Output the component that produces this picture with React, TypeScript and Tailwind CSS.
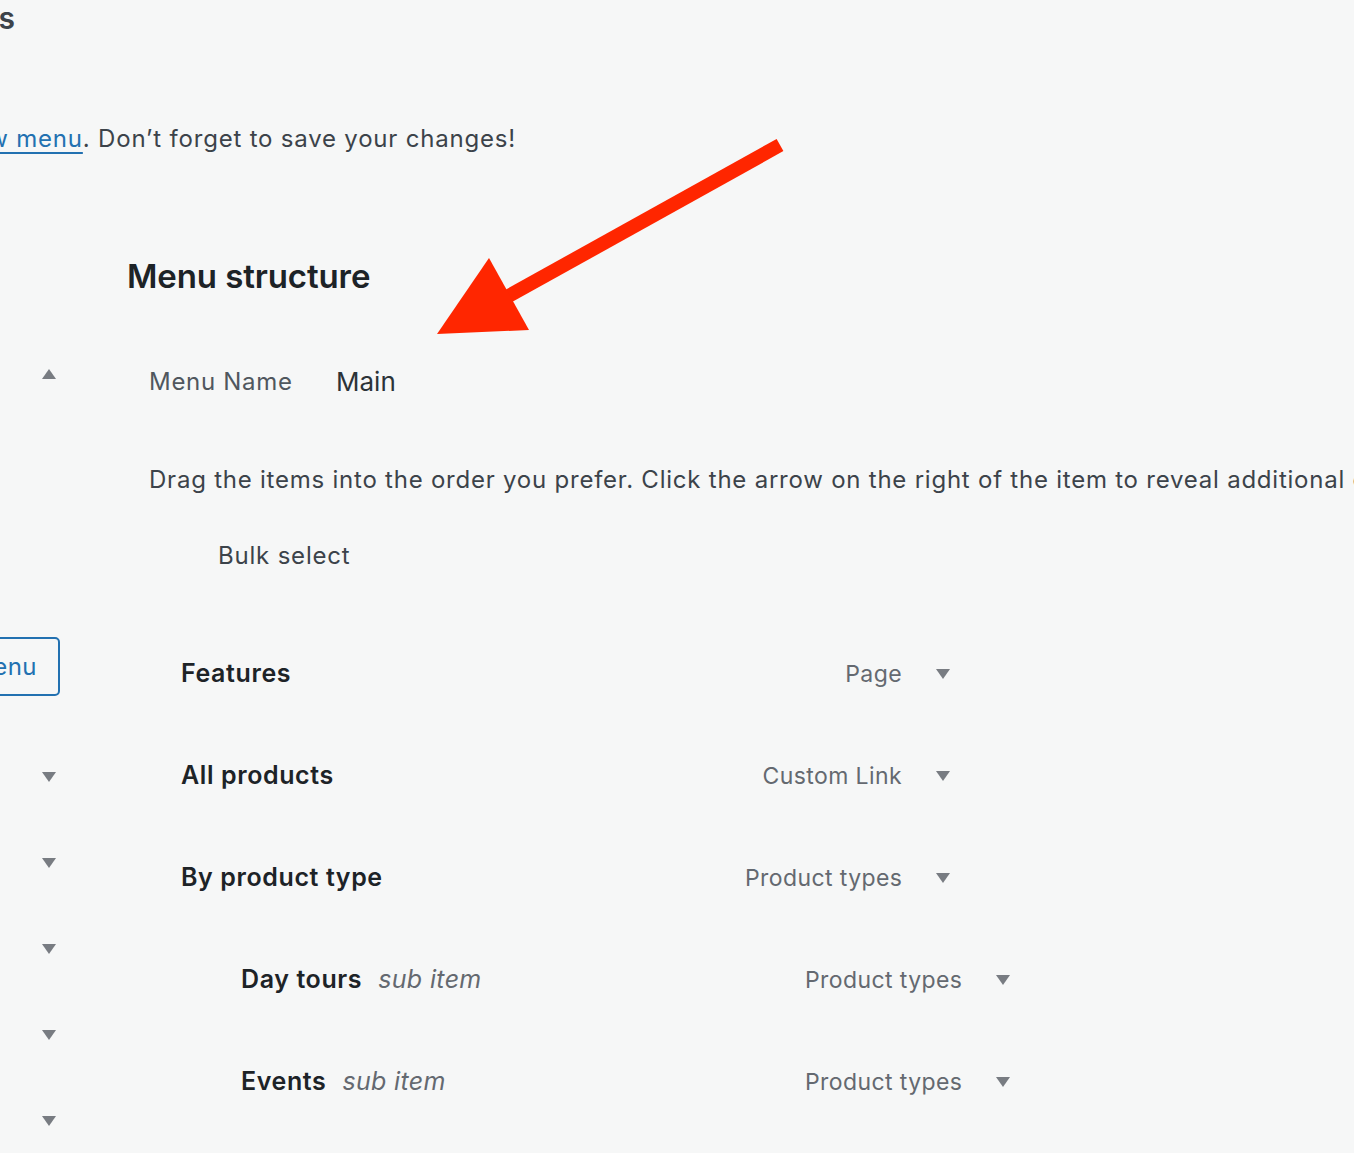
import React from "react";

type Item = { title: string; type: string; sub?: boolean };

const items: Item[] = [
  { title: "Features", type: "Page" },
  { title: "All products", type: "Custom Link" },
  { title: "By product type", type: "Product types" },
  { title: "Day tours", type: "Product types", sub: true },
  { title: "Events", type: "Product types", sub: true },
];

const Caret = ({ up = false }: { up?: boolean }) => (
  <svg width="14" height="10" viewBox="0 0 14 10" className="block shrink-0">
    <path d={up ? "M0 10 L7 0 L14 10 Z" : "M0 0 L14 0 L7 10 Z"} fill="#787c82" />
  </svg>
);

const MenuRow = ({ item }: { item: Item }) => (
  <div className={`flex items-center h-[102px] ${item.sub ? "pl-[114px]" : "pl-[54px]"}`}>
    <div className="flex items-baseline gap-[16px] w-[564px]">
      <span className="text-[25px] font-semibold text-[#1d2327] tracking-[0.6px]">{item.title}</span>
      {item.sub && <span className="text-[25px] italic text-[#646970] tracking-[0.35px]">sub item</span>}
    </div>
    <span className="w-[157px] text-right text-[23px] text-[#646970] tracking-[0.4px]">{item.type}</span>
    <span className="ml-[34px]">
      <Caret />
    </span>
  </div>
);

export default function App() {
  return (
    <div
      className="relative w-[1354px] h-[1153px] overflow-hidden bg-[#f6f7f7] text-[#3c434a]"
      style={{ fontFamily: "Inter, 'Noto Sans', sans-serif" }}
    >
      {/* page title, clipped at the left edge */}
      <div className="flex justify-end w-[15px] h-[36px]">
        <h1 className="whitespace-nowrap text-[30px] leading-[36px] font-semibold text-[#3c434a]">Menus</h1>
      </div>

      <div className="flex justify-end w-[516px] mt-[86px] h-[34px]">
        <p className="whitespace-nowrap text-[24px] leading-[34px] tracking-[0.8px]">
          Edit your menu below, or{" "}
          <a className="text-[#2271b1] underline underline-offset-[5px] decoration-[2px]">create a new menu</a>. Don’t
          forget to save your changes!
        </p>
      </div>

      <div className="flex mt-[102px]">
        {/* left column: accordion panels, mostly off screen */}
        <div className="w-[60px] shrink-0 flex flex-col items-end">
          <div className="mt-[111px] mr-[4px]">
            <Caret up />
          </div>
          <div className="mt-[258px] flex justify-end w-[60px]">
            <button className="shrink-0 whitespace-nowrap h-[59px] pl-[20px] pr-[21px] border-2 border-[#2271b1] rounded-[5px] text-[24px] text-[#2271b1] tracking-[0.5px]">
              Add to Menu
            </button>
          </div>
          <div className="mt-[76px] mr-[4px] flex flex-col gap-[76px]">
            <Caret />
            <Caret />
            <Caret />
            <Caret />
            <Caret />
          </div>
        </div>

        {/* right column: menu structure */}
        <div className="flex-1 pl-[67px] whitespace-nowrap">
          <h2 className="-mt-[2px] text-[33px] leading-[40px] font-semibold text-[#1d2327] tracking-[-0.1px]">
            Menu structure
          </h2>
          <div className="flex items-center mt-[66px] pl-[22px]">
            <span className="w-[187px] text-[24px] text-[#50575e] tracking-[0.7px]">Menu Name</span>
            <span className="text-[26px] text-[#2c3338]">Main</span>
          </div>
          <p className="mt-[61px] pl-[22px] text-[24px] tracking-[0.77px]">
            Drag the items into the order you prefer. Click the arrow on the right of the item to reveal additional
            configuration options.
          </p>
          <div className="mt-[40px] pl-[91px] text-[24px] tracking-[0.8px]">Bulk select</div>
          <div className="mt-[49px]">
            {items.map((it) => (
              <MenuRow key={it.title} item={it} />
            ))}
          </div>
        </div>
      </div>

      {/* annotation arrow over the page */}
      <svg className="absolute left-0 top-0 pointer-events-none" width="1354" height="1153">
        <line x1="780" y1="145" x2="505" y2="298" stroke="#ff2600" strokeWidth="14" />
        <polygon points="437,334 489,258 529,330" fill="#ff2600" />
      </svg>
    </div>
  );
}
